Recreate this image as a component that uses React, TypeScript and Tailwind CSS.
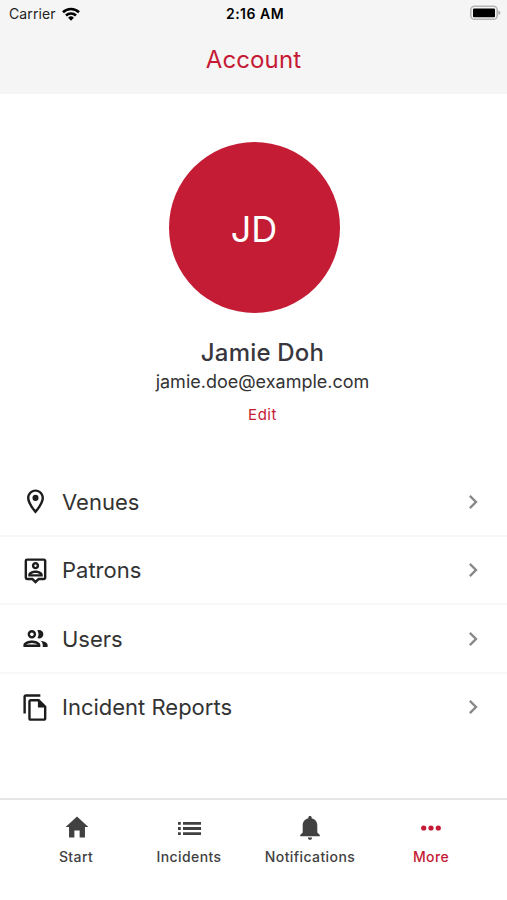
import React from 'react';
import { IoMdHome } from 'react-icons/io';
import {
  MdChevronRight,
  MdOutlineFileCopy,
  MdOutlineGroup,
  MdOutlinePersonPin
} from 'react-icons/md';

interface IconProps {
  className?: string;
}

interface MenuItem {
  label: string;
  icon: React.ComponentType<IconProps>;
}

interface TabProps {
  label: string;
  width: string;
  active?: boolean;
  children: React.ReactNode;
}

const PlaceIcon: React.FC<IconProps> = ({ className }) => (
  <svg className={className} viewBox="0 0 24 24" fill="currentColor">
    <path d="M12 2C8.13 2 5 5.13 5 9c0 5.25 7 13 7 13s7-7.75 7-13c0-3.87-3.13-7-7-7zM7 9c0-2.76 2.24-5 5-5s5 2.24 5 5c0 2.88-2.88 7.19-5 9.88C9.92 16.21 7 11.85 7 9z" />
    <circle cx="12" cy="9" r="2.5" />
  </svg>
);

const menuItems: MenuItem[] = [
  { label: 'Venues', icon: PlaceIcon },
  { label: 'Patrons', icon: MdOutlinePersonPin },
  { label: 'Users', icon: MdOutlineGroup },
  { label: 'Incident Reports', icon: MdOutlineFileCopy }
];

const StatusBar: React.FC = () => (
  <div className="grid h-7 grid-cols-3 items-center pr-[6px] pl-[9px] text-[#222]">
    <div className="flex items-center gap-[6px] pb-px text-[14px] tracking-[0.1px]">
      <span>Carrier</span>
      <svg className="h-[14px] w-[18px]" viewBox="0 0 18 14" fill="none" stroke="#000" strokeWidth="2.6">
        <path d="M1 5.2a11.5 11.5 0 0 1 16 0" />
        <path d="M4 8.5a7.2 7.2 0 0 1 10 0" />
        <path d="M9 13.7 6.1 10.8a4.1 4.1 0 0 1 5.8 0z" fill="#000" stroke="none" />
      </svg>
    </div>
    <span className="pb-px text-center text-[14px] font-semibold tracking-[0.5px] text-black">2:16 AM</span>
    <svg className="mb-[2px] ml-auto h-4 w-[31px]" viewBox="0 0 31 16">
      <rect x="0.8" y="1.3" width="26.4" height="13" rx="3.6" fill="#f5f5f5" stroke="#b5b5b5" strokeWidth="1.6" />
      <rect x="3" y="3.5" width="22" height="8.8" rx="1" fill="#000" />
      <path d="M28.4 5.6c2.6.8 2.6 3.6 0 4.4z" fill="#aaa" />
    </svg>
  </div>
);

const Tab: React.FC<TabProps> = ({ label, width, active, children }) => (
  <button className={`flex flex-col items-center ${width} ${active ? 'text-[#c51a35]' : 'text-[#424142]'}`}>
    <span className="flex h-[30px] items-center justify-center">{children}</span>
    <span className="mt-[5px] text-[14px] leading-[18px] font-medium tracking-[0.4px] whitespace-nowrap">{label}</span>
  </button>
);

const App: React.FC = () => {
  return (
    <div className="flex h-[900px] w-[507px] flex-col bg-white font-['Inter',sans-serif] text-[#333]">
      <header className="h-[94px] bg-[#f5f5f5]">
        <StatusBar />
        <h1 className="mt-4 text-center text-[24px] leading-8 tracking-[0.1px] text-[#c51a35]">Account</h1>
      </header>

      {/* Profile */}
      <section className="flex h-[374px] flex-col items-center pt-12">
        <div className="ml-px flex size-[171px] items-center justify-center rounded-full bg-[#c41c35] pt-[2px] text-[36px] text-white">
          JD
        </div>
        <div className="flex flex-col items-center pl-[18px]">
          <h2 className="mt-6 text-[24px] leading-8 font-medium tracking-[0.2px] text-[#38373e]">Jamie Doh</h2>
          <p className="mt-px text-[18px] leading-6">jamie.doe@example.com</p>
          <button className="mt-[11px] text-[15px] leading-5 tracking-[0.5px] text-[#c51a35]">Edit</button>
        </div>
      </section>

      <nav>
        {menuItems.map(({ label, icon: Icon }) => (
          <button
            key={label}
            className="flex h-[68.5px] w-full items-center border-b-2 border-[#f8f8f8] pt-[2px] pr-5 pl-[21px] last:border-b-0 last:pt-0"
          >
            <Icon className="mb-px size-[29px] text-[#1d1d1d]" />
            <span className="ml-3 text-[22px]">{label}</span>
            <MdChevronRight className="mb-px ml-auto size-7 text-[#888]" />
          </button>
        ))}
      </nav>

      {/* Bottom tabs */}
      <footer className="mt-auto flex h-[102px] border-t-2 border-[#e5e5e5] px-4 pt-[13px]">
        <Tab label="Start" width="w-[120px]">
          <IoMdHome className="mb-[2px] ml-px size-7" />
        </Tab>
        <Tab label="Incidents" width="w-[106px]">
          <svg className="h-[13px] w-[23px]" viewBox="0 0 23 13" fill="currentColor">
            <path d="M0 0h2.8v2.8H0zM5 0h18v2.8H5zM0 5.1h2.8v2.8H0zM5 5.1h18v2.8H5zM0 10.2h2.8V13H0zM5 10.2h18V13H5z" />
          </svg>
        </Tab>
        <Tab label="Notifications" width="w-[136px]">
          <svg className="h-6 w-5" viewBox="0 0 20 24" fill="currentColor">
            <path d="M10 0c1 0 1.7.7 1.7 1.7v.5c3.5.8 5.6 3.6 5.6 7.1v7.2l2.5 2.5v1.2H.2V19l2.5-2.5V9.3c0-3.5 2.1-6.3 5.6-7.1v-.5C8.3.7 9 0 10 0zM7.9 21.4h4.2c0 1.4-.9 2.3-2.1 2.3s-2.1-.9-2.1-2.3z" />
          </svg>
        </Tab>
        <Tab label="More" width="w-[106px]" active>
          <svg className="h-[6px] w-5" viewBox="0 0 20 6" fill="currentColor">
            <circle cx="2.7" cy="3" r="2.6" />
            <circle cx="10" cy="3" r="2.6" />
            <circle cx="17.3" cy="3" r="2.6" />
          </svg>
        </Tab>
      </footer>
    </div>
  );
};

export default App;
